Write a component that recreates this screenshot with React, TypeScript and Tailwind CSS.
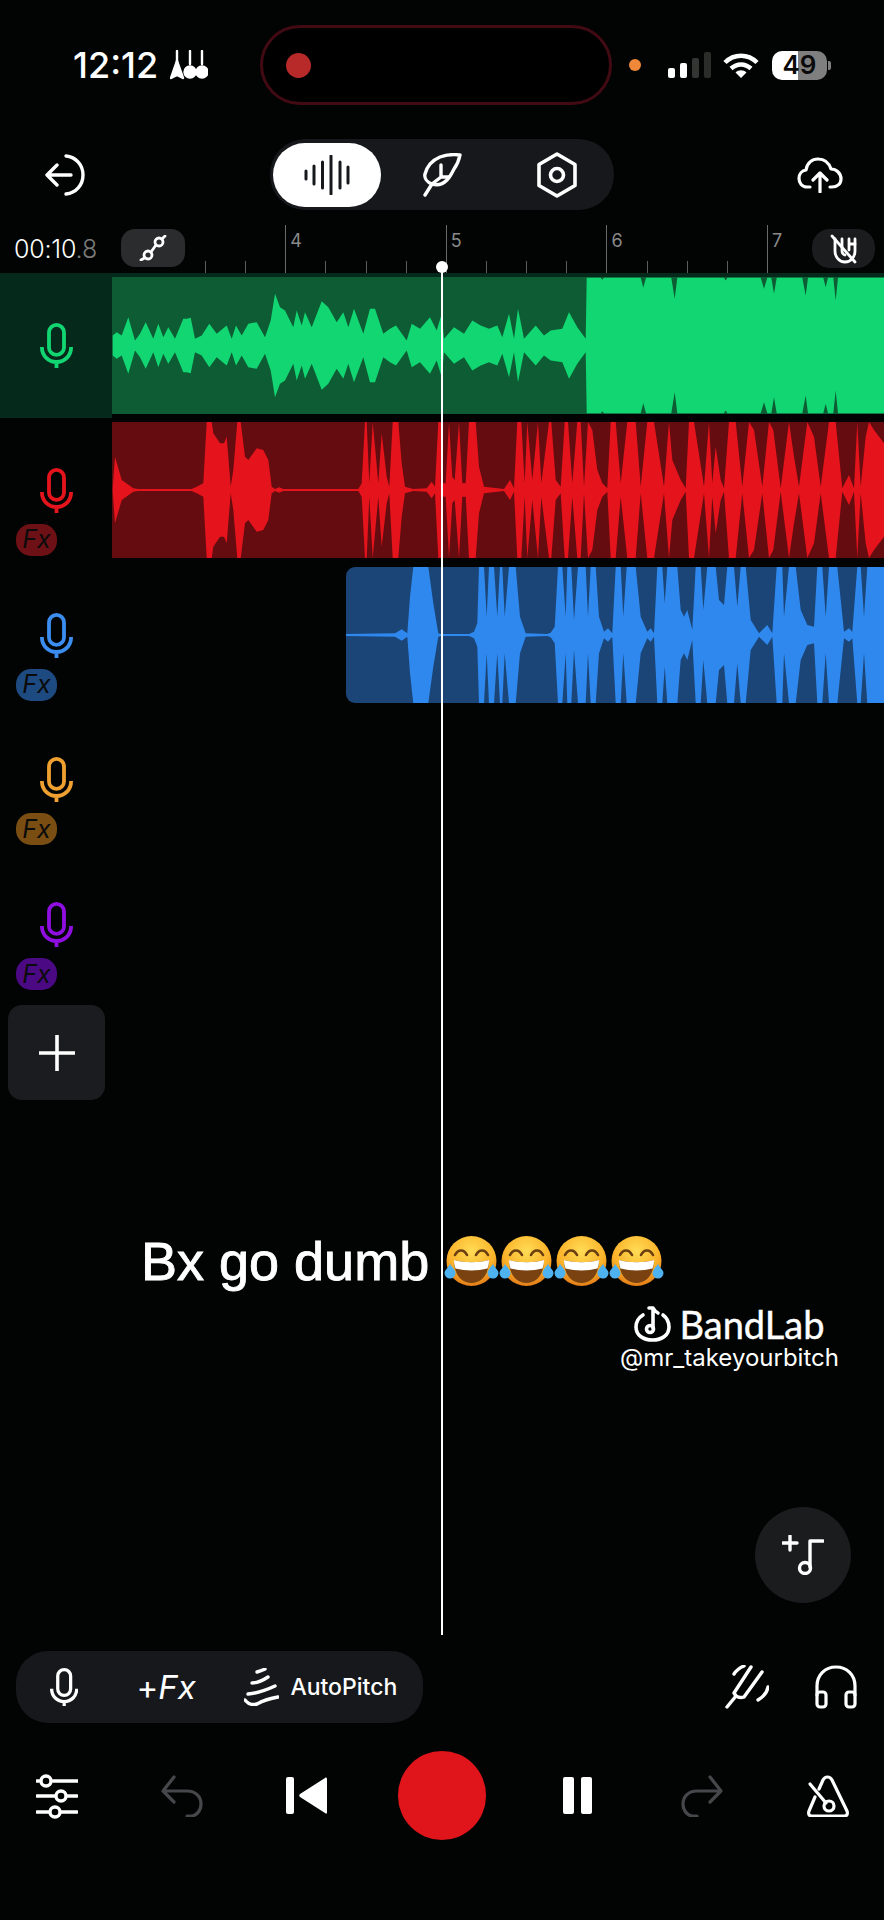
import type { FC, ReactNode } from "react";

type Env = [number, number][];

const seg = (offset: number, center: number, pts: number[]): Env => {
  const out: Env = [];
  for (let i = 0; i < pts.length; i += 2) {
    out.push([offset + pts[i] / 3, Math.max(0.8, (center - pts[i + 1]) / 3)]);
  }
  return out;
};

const GREEN: Env = [
  ...seg(0, 225, [338, 195, 350, 185, 365, 195, 385, 140, 405, 210, 420, 190, 437, 155, 460, 205, 475, 160, 490, 200, 505, 170, 525, 205, 550, 145, 560, 145, 572, 142, 585, 205, 605, 195, 628, 160, 650, 190, 680, 165, 695, 205, 708, 165, 725, 195, 745, 160, 770, 155, 795, 200, 812, 150, 825, 70, 840, 110, 855, 120, 880, 170, 890, 120, 905, 165, 915, 125, 935, 170, 965, 92, 985, 110, 1010, 155, 1030, 125, 1045, 170, 1062, 115, 1090, 190, 1110, 115, 1125, 115, 1150, 190, 1170, 175, 1188, 165, 1220, 210, 1235, 160, 1260, 175, 1290, 140, 1310, 180, 1325, 130]),
  ...seg(434, 225, [30, 205, 60, 170, 90, 190, 115, 150, 140, 165, 165, 175, 190, 165, 205, 200, 225, 130, 240, 205, 252, 115, 270, 205, 305, 165, 330, 195, 350, 180, 385, 175, 405, 125, 430, 170, 455, 205, 458, 22, 500, 22, 505, 28, 510, 22, 620, 22, 628, 52, 636, 22, 712, 22, 722, 85, 730, 22, 870, 22, 875, 30, 880, 22, 980, 22, 990, 55, 1000, 22, 1012, 22, 1020, 70, 1028, 22, 1105, 22, 1115, 75, 1122, 22, 1168, 22, 1175, 50, 1182, 22, 1198, 22, 1205, 90, 1212, 22, 1350, 22]),
];

const RED: Env = [
  ...seg(0, 660, [338, 655, 345, 560, 365, 630, 400, 655, 415, 657, 575, 657, 595, 648, 610, 640, 620, 456, 635, 456, 640, 490, 660, 520, 672, 520, 680, 500, 692, 650, 700, 600, 712, 456, 722, 456, 735, 560, 745, 570, 770, 535, 790, 540, 805, 570, 815, 650, 825, 657, 838, 652, 850, 657, 1075, 657, 1085, 640, 1095, 456, 1100, 456, 1108, 640, 1118, 456, 1125, 530, 1135, 640, 1145, 490, 1160, 620, 1168, 650, 1178, 456, 1195, 456, 1205, 580, 1215, 650, 1240, 657, 1280, 655, 1295, 635, 1305, 650, 1315, 456, 1325, 456]),
  ...seg(434, 660, [20, 640, 35, 640, 45, 456, 55, 620, 62, 630, 75, 456, 85, 640, 95, 640, 105, 456, 125, 456, 135, 590, 150, 650, 210, 657, 228, 630, 240, 655, 250, 456, 262, 456, 272, 640, 280, 456, 295, 630, 312, 456, 322, 640, 345, 456, 352, 456, 365, 630, 380, 650, 392, 456, 402, 456, 415, 640, 430, 456, 440, 456, 450, 650, 462, 456, 475, 480, 490, 600, 505, 640, 520, 655, 530, 456, 545, 456, 560, 640, 580, 456, 605, 456, 620, 650, 640, 456, 660, 456, 690, 650, 705, 456, 715, 570, 740, 630, 755, 655, 765, 456, 780, 456, 810, 650, 825, 456, 835, 640, 845, 530, 860, 630, 870, 655, 885, 456, 905, 456, 925, 650, 945, 456, 960, 480, 985, 650, 1005, 456, 1018, 480, 1040, 655, 1065, 456, 1080, 560, 1095, 650, 1120, 456, 1140, 500, 1160, 650, 1185, 456, 1205, 456, 1225, 655, 1245, 615, 1260, 655, 1270, 456, 1280, 650, 1295, 500, 1305, 456, 1320, 480, 1350, 520]),
];

const BLUE: Env = [
  ...seg(0, 1095, [1037, 1092, 1185, 1090, 1205, 1078, 1222, 1090, 1230, 980, 1240, 890, 1285, 890, 1300, 1000, 1315, 1090, 1330, 1092]),
  ...seg(434, 1095, [10, 1090, 20, 1092, 105, 1092, 120, 1085, 130, 1060, 135, 890, 150, 890, 158, 1040, 165, 890, 180, 890, 190, 1040, 198, 890, 205, 890, 212, 1040, 225, 890, 245, 890, 258, 1040, 275, 1090, 340, 1092, 350, 1088, 362, 1070, 372, 890, 385, 890, 395, 1040, 400, 890, 412, 890, 420, 1050, 432, 890, 455, 890, 462, 1040, 470, 890, 485, 890, 495, 1040, 510, 1085, 522, 1075, 535, 1090, 545, 890, 560, 890, 568, 1040, 578, 890, 605, 890, 620, 1040, 640, 1085, 650, 1075, 660, 1090, 670, 890, 685, 890, 692, 1000, 700, 890, 730, 890, 740, 1020, 750, 1040, 760, 1020, 775, 1080, 785, 890, 800, 890, 808, 1020, 820, 890, 845, 890, 855, 990, 870, 1005, 880, 890, 900, 890, 910, 1010, 920, 890, 935, 890, 950, 1050, 975, 1090, 1000, 1065, 1015, 1090, 1028, 890, 1045, 890, 1050, 1040, 1065, 890, 1085, 890, 1100, 1020, 1120, 1065, 1140, 1070, 1150, 890, 1165, 890, 1175, 1040, 1185, 890, 1210, 890, 1230, 1085, 1245, 1075, 1255, 1085, 1270, 890, 1280, 890, 1290, 1040, 1300, 890, 1350, 890]),
];

const Wave: FC<{ env: Env; left: number; width: number; height: number; color: string }> = ({ env, left, width, height, color }) => {
  const mid = height / 2;
  const top = env.map(([x, a]) => `${(x - left).toFixed(1)},${(mid - a).toFixed(1)}`);
  const bottom = [...env].reverse().map(([x, a]) => `${(x - left).toFixed(1)},${(mid + a).toFixed(1)}`);
  return (
    <svg width={width} height={height} viewBox={`0 0 ${width} ${height}`} className="block">
      <polygon points={[...top, ...bottom].join(" ")} fill={color} />
    </svg>
  );
};

const Mic: FC<{ color: string; className?: string; scale?: number }> = ({ color, className, scale = 1 }) => (
  <svg width={33 * scale} height={45 * scale} viewBox="0 0 33 45" fill="none" stroke={color} strokeWidth="3.8" className={className}>
    <rect x="9" y="1.9" width="15" height="30" rx="7.5" />
    <path d="M1.900 24c0 9 6.600 15 14.600 15s14.600-6 14.600-15M16.500 39v6" />
  </svg>
);

const Icon: FC<{ w: number; h: number; className?: string; sw?: number; color?: string; children: ReactNode }> = ({ w, h, className, sw = 3, color = "#ffffff", children }) => (
  <svg width={w} height={h} viewBox={`0 0 ${w} ${h}`} fill="none" stroke={color} strokeWidth={sw} strokeLinecap="round" strokeLinejoin="round" className={`shrink-0 ${className ?? ""}`}>
    {children}
  </svg>
);

const Emoji: FC = () => (
  <svg width="55" height="50" viewBox="0 0 55 50" className="shrink-0" aria-label="😂" role="img">
    <defs>
      <radialGradient id="faceFill" cx="50%" cy="30%" r="70%">
        <stop offset="0%" stopColor="#ffdc55" />
        <stop offset="65%" stopColor="#fbb32a" />
        <stop offset="100%" stopColor="#e27c18" />
      </radialGradient>
    </defs>
    <ellipse cx="27.5" cy="25" rx="25" ry="25" fill="url(#faceFill)" />
    <path d="M11 19c3-6 9-6 12 0M32 19c3-6 9-6 12 0" fill="none" stroke="#6b3f12" strokeWidth="2.6" strokeLinecap="round" />
    <path d="M10 24c10 3 25 3 35 0c0 14-7 23-17.500 23S10 38 10 24z" fill="#7a4210" />
    <path d="M10 24c10 3 25 3 35 0c0 3-.5 6-1.500 8.500c-10 2.500-22 2.500-32 0C10.500 30 10 27 10 24z" fill="#ffffff" />
    <path d="M6 28c-2 4-5.500 6-5.500 9a5.500 5.500 0 0 0 11 0c0-3-3.500-6-5.500-9zM49 28c2 4 5.500 6 5.500 9a5.500 5.500 0 0 1-11 0c0-3 3.500-6 5.500-9z" fill="#4fb2f0" />
  </svg>
);

const TRACKS = [
  { mic: "#12d672", fx: null as string | null },
  { mic: "#e5141c", fx: "#6d1116" },
  { mic: "#3b8df0", fx: "#1d4a80" },
  { mic: "#f0a030", fx: "#7a4e12" },
  { mic: "#8f0ee0", fx: "#4b0a84" },
];

const TICKS = [0, 1, 2, 3, 4, 5, 6, 7, 8, 9, 10, 11, 12, 13, 14];
const BAR_LABEL: Record<number, string> = { 2: "4", 6: "5", 10: "6", 14: "7" };

const TrackHead: FC<{ mic: string; fx: string | null; active?: boolean }> = ({ mic, fx, active }) => (
  <div className={`flex h-full w-[112px] shrink-0 flex-col pt-[50px] ${active ? "bg-[#05291b]" : ""}`}>
    <Mic color={mic} className="ml-[40px]" />
    {fx && (
      <div className="ml-[16px] mt-[11px] flex h-[32px] w-[41px] items-center justify-center rounded-[15px]" style={{ backgroundColor: fx }}>
        <span className="text-[25px] italic leading-none text-[#0b0b0b] [font-family:Inter,sans-serif]">Fx</span>
      </div>
    )}
  </div>
);

export default function App() {
  return (
    <div className="relative flex h-[1920px] w-[884px] flex-col overflow-hidden bg-[#010402] text-white [font-family:Inter,sans-serif]">
      {/* status bar */}
      <div className="mt-[25px] flex h-[80px] items-center">
        <span className="ml-[73px] w-[90px] text-[36px] font-medium leading-none">12:12</span>
        <Icon w={38} h={30} sw={2.4} className="ml-[7px]">
          <path d="M7 1v14M20 1v13M32 1v13" />
          <path d="M7 11L1 28l6-3 6 3z" fill="#ffffff" />
          <circle cx="20" cy="22" r="5.500" fill="#ffffff" />
          <circle cx="32" cy="22" r="5.500" fill="#ffffff" />
        </Icon>
        <div className="ml-[52px] flex h-[80px] w-[352px] items-center rounded-[40px] border-[3px] border-[#420b14] bg-black pl-[23px]">
          <div className="h-[25px] w-[25px] rounded-full bg-[#b82a2a]" />
        </div>
        <div className="ml-[17px] h-[12px] w-[12px] rounded-full bg-[#f0883a]" />
        <div className="ml-[27px] flex items-end gap-[5px]">
          <div className="h-[10px] w-[7px] rounded-[2px] bg-white" />
          <div className="h-[15px] w-[7px] rounded-[2px] bg-white" />
          <div className="h-[20px] w-[7px] rounded-[2px] bg-[#333533]" />
          <div className="h-[26px] w-[7px] rounded-[2px] bg-[#2b2d2b]" />
        </div>
        <svg width="36" height="25" viewBox="0 0 36 25" className="ml-[12px] shrink-0" fill="none" stroke="#ffffff" strokeWidth="4.500">
          <path d="M2 9.500c9-9 23-9 32 0M8 15.500c6-5.500 14-5.500 20 0" />
          <path d="M18 25l-5.500-5.500c3-3 8-3 11 0z" fill="#ffffff" stroke="none" />
        </svg>
        <div className="ml-[13px] relative flex h-[29px] w-[55px] items-center justify-center overflow-hidden rounded-[10px] bg-[linear-gradient(90deg,#ffffff_0%,#ffffff_47%,#7f7f7f_47%,#7f7f7f_100%)]">
          <span className="text-[26px] font-semibold leading-none text-[#0a0a0a]">49</span>
        </div>
        <div className="ml-[1px] h-[9px] w-[3px] rounded-r-[2px] bg-[#7f7f7f]" />
      </div>

      {/* toolbar */}
      <div className="mt-[34px] flex h-[71px] items-center">
        <Icon w={40} h={42} sw={3.400} className="ml-[45px]">
          <path d="M2 21h24M12 11L2 21l10 10" />
          <path d="M21 2c10 1 17 9 17 19s-7 18-17 19" />
        </Icon>
        <div className="ml-[185px] flex h-[71px] w-[344px] items-center rounded-[35px] bg-[#16181b]">
          <div className="ml-[3px] flex h-[64px] w-[108px] items-center justify-center rounded-[32px] bg-white">
            <Icon w={46} h={40} sw={3} color="#16181b">
              <path d="M2 16v8M10 11v18M18.500 7v26M27 1v38M36 7v26M44 12v16" />
            </Icon>
          </div>
          <Icon w={40} h={44} sw={3.400} className="ml-[41px]">
            <path d="M3 42l7-11" />
            <path d="M10 31c-5-2-8-6-7-10c2-8 8-14 15-17c6-2 13-3 20-2c-1 5-3 10-6 14c-2 4-4 8-7 11c-4 4-9 6-15 4z" />
            <path d="M10 31l9-7h8M19 24V12" />
          </Icon>
          <Icon w={42} h={46} sw={3.600} className="ml-[74px]">
            <path d="M21 2l18 10.500v21L21 44 3 33.500v-21z" />
            <circle cx="21" cy="23" r="6.500" />
          </Icon>
        </div>
        <Icon w={46} h={36} sw={3.200} className="ml-[183px]">
          <path d="M13 30H10C5 30 2 26 2 21.500c0-4.500 3-8 7-8.500C10 6 15 2 21 2c7 0 11 4 13 10c5 0 10 4 10 10c0 5-4 8-9 8h-2" />
          <path d="M23 35V16M16 23l7-7 7 7" />
        </Icon>
      </div>

      {/* ruler */}
      <div className="mt-[15px] flex h-[48px]">
        <div className="ml-[14px] mt-[9px] w-[107px] text-[25px] font-light leading-[30px] tracking-[-0.2px]">
          00:10<span className="text-[#7a7a7a]">.8</span>
        </div>
        <div className="mt-[4px] flex h-[38px] w-[64px] items-center justify-center rounded-[14px] bg-[#2a2c2e]">
          <Icon w={30} h={26} sw={2.800}>
            <circle cx="10" cy="20" r="4" />
            <circle cx="21" cy="7" r="4" />
            <path d="M13 17l5-7M6.500 23L3 25M24 4l3-3" />
          </Icon>
        </div>
        <div className="ml-[20px] flex h-[48px] items-end">
          {TICKS.map((t) => (
            <div key={t} className="flex h-[48px] w-[40.15px] items-end">
              {BAR_LABEL[t] ? (
                <div className="relative h-[48px] w-[1px] bg-[#6a6a6a]">
                  <span className="absolute left-[5px] top-[5px] text-[18px] leading-[22px] text-[#8a8a8a]">{BAR_LABEL[t]}</span>
                </div>
              ) : (
                <div className="h-[12px] w-[1px] bg-[#5c5c5c]" />
              )}
            </div>
          ))}
        </div>
        <div className="ml-[5px] mt-[4px] flex h-[39px] w-[63px] items-center justify-center rounded-[18px] bg-[#1a1c1e]">
          <Icon w={28} h={30} sw={2.800}>
            <path d="M5 5v12c0 5.500 4 11 10 11s10-5.500 10-11V5" />
            <path d="M12 5v12c0 2 1.500 4 3 4M19 5v11M19 10h6" />
            <path d="M2 2l23 26" />
          </Icon>
        </div>
      </div>

      {/* tracks */}
      <div className="flex h-[144.75px]">
        <TrackHead mic={TRACKS[0].mic} fx={null} active />
        <div className="h-full flex-1">
          <div className="h-[4px] bg-[#05291b]" />
          <div className="h-[137px] overflow-hidden bg-[#0d5c34]">
            <Wave env={GREEN} left={112} width={772} height={137} color="#12d672" />
          </div>
        </div>
      </div>
      <div className="flex h-[144.75px]">
        <TrackHead mic={TRACKS[1].mic} fx={TRACKS[1].fx} />
        <div className="h-full flex-1 pt-[4px]">
          <div className="h-[136px] overflow-hidden bg-[#650c10]">
            <Wave env={RED} left={112} width={772} height={136} color="#e5141c" />
          </div>
        </div>
      </div>
      <div className="flex h-[144.75px]">
        <TrackHead mic={TRACKS[2].mic} fx={TRACKS[2].fx} />
        <div className="h-full flex-1 pl-[234px] pt-[4px]">
          <div className="h-[136px] overflow-hidden rounded-l-[9px] bg-[#1a4576]">
            <Wave env={BLUE} left={346} width={538} height={136} color="#2f88ee" />
          </div>
        </div>
      </div>
      <div className="flex h-[144.75px]">
        <TrackHead mic={TRACKS[3].mic} fx={TRACKS[3].fx} />
      </div>
      <div className="flex h-[144.75px]">
        <TrackHead mic={TRACKS[4].mic} fx={TRACKS[4].fx} />
      </div>

      <div className="ml-[8px] mt-[8.250px] flex h-[95px] w-[97px] items-center justify-center rounded-[14px] bg-[#1a1c1f]">
        <Icon w={38} h={38} sw={3.600}>
          <path d="M19 1v36M1 19h36" style={{ strokeLinecap: "butt" }} />
        </Icon>
      </div>

      {/* caption */}
      <div className="ml-[141px] mt-[136px] flex h-[50px] items-center">
        <span className="w-[303px] text-[54px] leading-none [-webkit-text-stroke:0.9px_white] [font-family:'Liberation_Sans',sans-serif]">Bx go dumb</span>
        <Emoji />
        <Emoji />
        <Emoji />
        <Emoji />
      </div>

      {/* watermark */}
      <div className="ml-[621px] mt-[20px] flex w-[217px] flex-col items-center">
        <div className="flex h-[35px] items-center gap-[8px]">
          <Icon w={37} h={36} sw={3.600}>
            <path d="M9 9C4 12 2 16 2 21c0 8 7 13 16.500 13S35 29 35 21c0-5-2-9-6-12" />
            <path d="M15 2h4c1 2 3 4 5 5M19 2v20" />
            <circle cx="16" cy="23" r="3.500" />
          </Icon>
          <span className="text-[38px] leading-none [-webkit-text-stroke:0.4px_white] [font-family:Lato,sans-serif]">BandLab</span>
        </div>
        <span className="mt-[3px] text-[24px] leading-[28px] [font-family:Inter,sans-serif]">@mr_takeyourbitch</span>
      </div>

      {/* add loop */}
      <div className="ml-[755px] mt-[135px] flex h-[96px] w-[96px] items-center justify-center rounded-full bg-[#1a1c1e]">
        <Icon w={42} h={40} sw={3.400}>
          <path d="M8 1v14M1 8h14" />
          <path d="M28 32V6h13" />
          <circle cx="23" cy="33" r="5.500" />
        </Icon>
      </div>

      {/* track tools */}
      <div className="mt-[48px] flex h-[72px] items-center">
        <div className="ml-[16px] flex h-[72px] w-[407px] items-center rounded-[32px] bg-[#16181b]">
          <Mic color="#ffffff" scale={0.86} className="ml-[34px] shrink-0" />
          <span className="ml-[58px] w-[72px] whitespace-nowrap text-[33px] leading-none [font-family:Inter,sans-serif]">
            +<span className="italic">Fx</span>
          </span>
          <Icon w={35} h={38} sw={3.400} className="ml-[36px]">
            <path d="M13 4Q17 3 21 1M8 15Q15 15 24 9M4 26Q16 25 31 18M1 32Q6 38 13 36Q22 31 34 29" />
          </Icon>
          <span className="ml-[11px] text-[23px] font-medium leading-none [font-family:Inter,sans-serif]">AutoPitch</span>
        </div>
        <Icon w={44} h={44} sw={3.400} className="ml-[302px]">
          <path d="M2 42l9-11" />
          <path d="M26 2L9 28l2 3c3 2 5 2 8 1L37 7" />
          <path d="M9 9c2-3 5-6 10-8M33 35c5-3 9-7 10-13" />
        </Icon>
        <Icon w={42} h={44} sw={3.200} className="ml-[46px]">
          <path d="M2 30V21C2 10 10 2 21 2s19 8 19 19v9" />
          <rect x="2" y="27" width="9" height="15" rx="3" />
          <rect x="31" y="27" width="9" height="15" rx="3" />
        </Icon>
      </div>

      {/* transport */}
      <div className="mt-[28px] flex h-[89px] items-center">
        <Icon w={42} h={46} sw={3.400} className="ml-[36px]">
          <path d="M17 8h25M1 23h18M31 23h10M1 39h12M25 39h16M1 8h2" />
          <circle cx="10" cy="8" r="5" />
          <circle cx="25" cy="23" r="5" />
          <circle cx="19" cy="39" r="5" />
        </Icon>
        <Icon w={43} h={42} sw={3.200} color="#45474a" className="ml-[82px]">
          <path d="M14 2L3 16l11 11M3 16h24c9 0 14 6 14 13s-5 12-10 12h-4" />
        </Icon>
        <svg width="41" height="37" viewBox="0 0 41 37" className="ml-[83px] shrink-0" fill="#ffffff">
          <rect x="0" y="0" width="8" height="37" rx="2" />
          <path d="M41 2v33c0 2-1 2-2 1L14 20c-1-1-1-2 0-3L39 1c1-1 2 0 2 1z" />
        </svg>
        <div className="ml-[71px] h-[89px] w-[88px] rounded-full bg-[#e0141b]" />
        <div className="ml-[77px] flex h-[37px] w-[29px] justify-between">
          <div className="h-full w-[11px] rounded-[2px] bg-white" />
          <div className="h-full w-[11px] rounded-[2px] bg-white" />
        </div>
        <Icon w={43} h={42} sw={3.200} color="#45474a" className="ml-[89px]">
          <path d="M29 2l11 14-11 11M40 16H16C7 16 2 22 2 29s5 12 10 12h4" />
        </Icon>
        <Icon w={42} h={42} sw={3.200} className="ml-[83px]">
          <path d="M16 5c2-4 7-4 9 0l15 31c1 3 0 5-3 5H5c-3 0-4-2-3-5l6-14M16 5l-4 9" />
          <path d="M3 9l16 19" />
          <circle cx="22" cy="31" r="5" />
        </Icon>
      </div>

      {/* playhead */}
      <div className="absolute left-[441px] top-[267px] h-[1368px] w-[2px] bg-white" />
      <div className="absolute left-[436px] top-[261px] h-[12px] w-[12px] rounded-full bg-white" />
    </div>
  );
}
